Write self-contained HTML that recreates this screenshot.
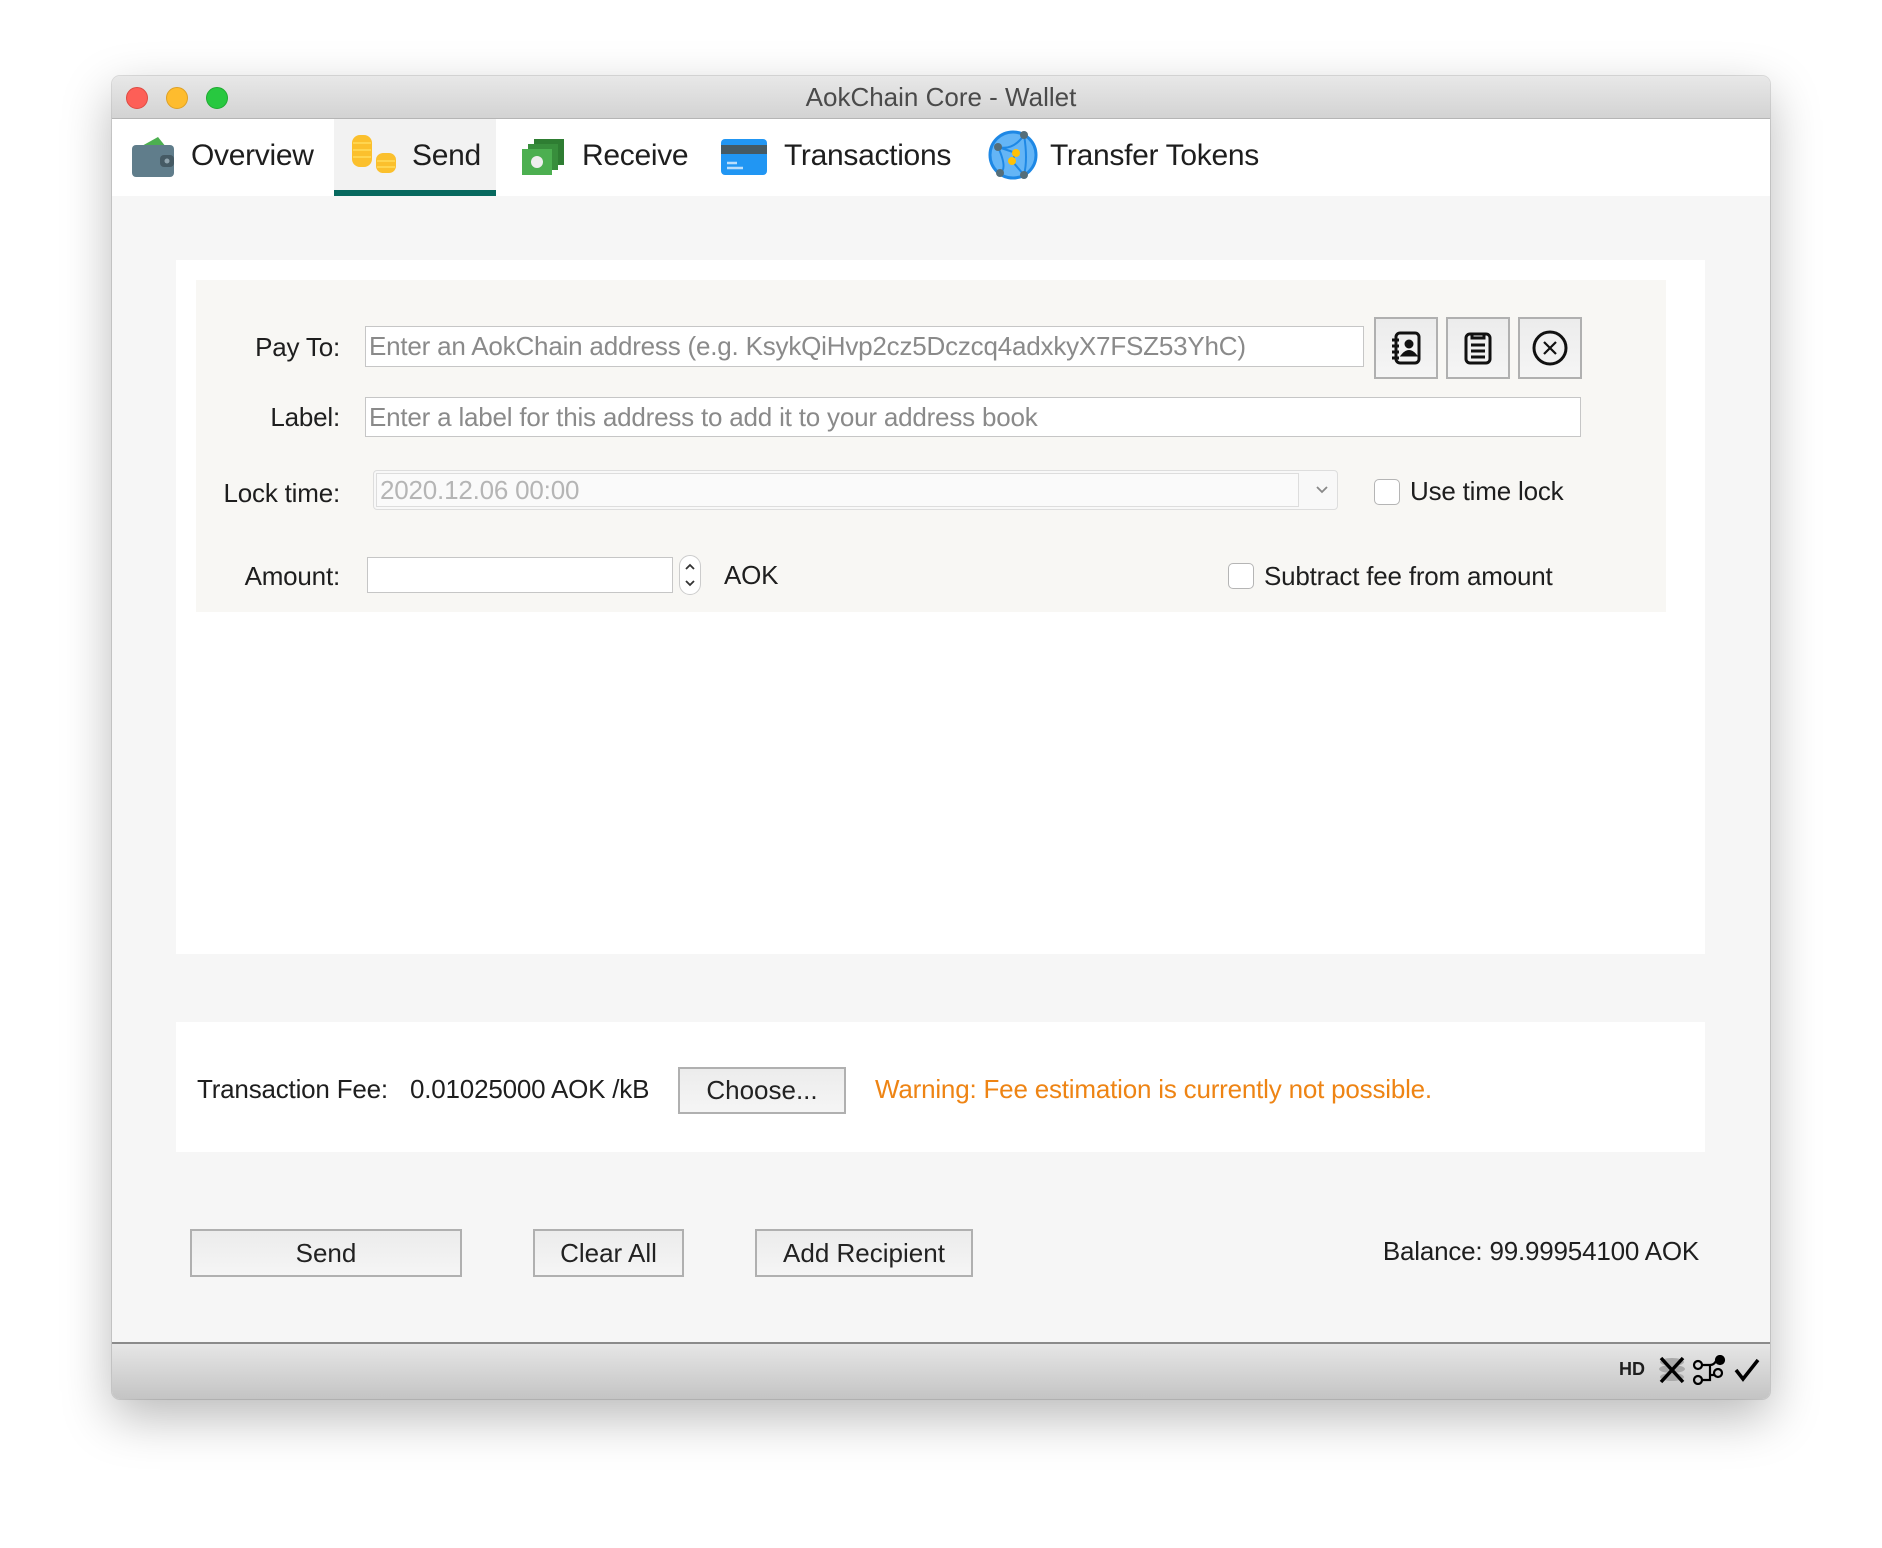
<!DOCTYPE html>
<html><head><meta charset="utf-8"><style>
*{box-sizing:border-box;margin:0;padding:0}
body{width:1882px;height:1548px;background:#fff;position:relative;font-family:"Liberation Sans",sans-serif;color:#1e1e1e;overflow:hidden}
.a{position:absolute}
.win{left:112px;top:76px;width:1658px;height:1323px;background:#f6f6f6;border-radius:8px;box-shadow:0 18px 50px rgba(0,0,0,.28),0 0 0 1px rgba(0,0,0,.12);overflow:hidden}
.title{left:0;top:0;width:1658px;height:43px;background:linear-gradient(#e8e8e8,#d3d3d3);border-bottom:1px solid #b5b5b5;text-align:center;font-size:26px;line-height:43px;color:#4a4a4a}
.dot{top:11px;width:22px;height:22px;border-radius:50%}
.tabs{left:0;top:43px;width:1658px;height:77px;background:#fff}
.tab{font-size:30px;top:0;line-height:73px;letter-spacing:-0.3px}
.txt{font-size:26px;white-space:nowrap;letter-spacing:-0.2px}
.inp{background:#fff;border:1px solid #c6c6c6;font-size:26px;color:#8a8a8a;padding-left:3px;white-space:nowrap;overflow:hidden;letter-spacing:-0.2px}
.btn{background:linear-gradient(#ececec,#f5f5f5);border:2px solid #b0b0b0;font-size:26px;text-align:center;color:#222}
.cb{width:26px;height:26px;border:1.5px solid #b5b5b5;border-radius:5px;background:#fff}
</style></head><body>
<div class="a win">
 <div class="a title">AokChain Core - Wallet</div>
 <div class="a dot" style="left:14px;background:#fd5f57;border:1px solid #de4a42"></div>
 <div class="a dot" style="left:54px;background:#febc2e;border:1px solid #dea024"></div>
 <div class="a dot" style="left:94px;background:#28c840;border:1px solid #1eaa30"></div>
 <div class="a tabs">
  <div class="a" style="left:222px;top:0;width:162px;height:77px;background:#f2f2f2"></div>
  <div class="a" style="left:222px;top:71px;width:162px;height:6px;background:#08695f"></div>
  <svg class="a" style="left:18px;top:14px" width="46" height="46" viewBox="0 0 46 46"><path d="M10 14 L28 4 L36 14Z" fill="#4caf50"/><rect x="2" y="12" width="42" height="32" rx="4" fill="#607d8b"/><rect x="30" y="22" width="14" height="12" rx="4" fill="#455a64"/><circle cx="37" cy="28" r="2.5" fill="#90a4ae"/></svg>
  <div class="a tab" style="left:79px">Overview</div>
  <svg class="a" style="left:238px;top:14px" width="46" height="44" viewBox="0 0 46 44"><g fill="#fbc02d"><rect x="2" y="2" width="20" height="32" rx="8"/><rect x="26" y="20" width="20" height="20" rx="7"/></g><g stroke="#ffd54f" stroke-width="2"><path d="M3 10h18M3 17h18M3 24h18M27 28h18M27 34h18"/></g></svg>
  <div class="a tab" style="left:300px">Send</div>
  <svg class="a" style="left:410px;top:18px" width="42" height="40" viewBox="0 0 42 40"><rect x="12" y="2" width="30" height="26" fill="#2e7d32"/><rect x="6" y="7" width="30" height="26" fill="#388e3c"/><rect x="0" y="12" width="30" height="26" fill="#4caf50"/><circle cx="15" cy="25" r="6" fill="#eee"/></svg>
  <div class="a tab" style="left:470px">Receive</div>
  <svg class="a" style="left:609px;top:20px" width="46" height="36" viewBox="0 0 46 36"><rect x="0" y="0" width="46" height="36" rx="4" fill="#2196f3"/><rect x="0" y="6" width="46" height="9" fill="#455a64"/><path d="M6 24h10M6 29h16" stroke="#bbdefb" stroke-width="2.5"/></svg>
  <div class="a tab" style="left:672px">Transactions</div>
  <svg class="a" style="left:876px;top:10px" width="50" height="52" viewBox="0 0 50 52"><circle cx="25" cy="26" r="23" fill="#64b5f6" stroke="#1e88e5" stroke-width="3"/><path d="M10 18 Q25 22 36 6 M10 18 Q20 40 12 44 M36 6 Q40 30 36 46 M10 18 L28 24 L24 32 L36 46" stroke="#1e88e5" stroke-width="2" fill="none"/><g fill="#546e7a"><circle cx="10" cy="18" r="4"/><circle cx="36" cy="6" r="4"/><circle cx="12" cy="44" r="4"/><circle cx="36" cy="46" r="4"/></g><g fill="#ffc107"><circle cx="28" cy="24" r="4"/><circle cx="24" cy="32" r="4"/></g></svg>
  <div class="a tab" style="left:938px">Transfer Tokens</div>
 </div>

 <div class="a" style="left:64px;top:184px;width:1529px;height:694px;background:#fff"></div>
 <div class="a" style="left:84px;top:204px;width:1470px;height:332px;background:#f8f7f4"></div>

 <div class="a txt" style="right:1430px;top:256px">Pay To:</div>
 <div class="a inp" style="left:253px;top:250px;width:999px;height:41px;line-height:39px">Enter an AokChain address (e.g. KsykQiHvp2cz5Dczcq4adxkyX7FSZ53YhC)</div>
 <div class="a btn" style="left:1262px;top:241px;width:64px;height:62px"></div>
 <div class="a btn" style="left:1334px;top:241px;width:64px;height:62px"></div>
 <div class="a btn" style="left:1406px;top:241px;width:64px;height:62px"></div>
 <svg class="a" style="left:1276px;top:254px" width="36" height="36" viewBox="0 0 36 36" fill="none" stroke="#111" stroke-width="3"><rect x="8" y="3" width="23" height="30" rx="4"/><path d="M4 10h7M4 16h7M4 22h7M4 28h7"/><circle cx="21" cy="14" r="3" fill="#111"/><path d="M15 25q6-7 12 0z" fill="#111"/></svg>
 <svg class="a" style="left:1348px;top:254px" width="36" height="36" viewBox="0 0 36 36" fill="none" stroke="#111" stroke-width="3"><rect x="6" y="4" width="24" height="29" rx="4"/><path d="M12 4v4h12V4M11 15h14M11 21h14M11 27h14"/></svg>
 <svg class="a" style="left:1419px;top:253px" width="38" height="38" viewBox="0 0 38 38" fill="none" stroke="#111" stroke-width="3"><circle cx="19" cy="19" r="16"/><path d="M13 13l12 12M25 13l-12 12" stroke-width="2.2"/></svg>

 <div class="a txt" style="right:1430px;top:326px">Label:</div>
 <div class="a inp" style="left:253px;top:321px;width:1216px;height:40px;line-height:38px">Enter a label for this address to add it to your address book</div>

 <div class="a txt" style="right:1430px;top:402px">Lock time:</div>
 <div class="a" style="left:261px;top:394px;width:965px;height:40px;border:1px solid #ddd;border-radius:4px;background:#f8f8f8"></div>
 <div class="a inp" style="left:264px;top:397px;width:923px;height:34px;line-height:32px;color:#b5b5b5;background:#fafafa;border-color:#ddd">2020.12.06 00:00</div>
 <svg class="a" style="left:1202px;top:408px" width="16" height="12" viewBox="0 0 16 12" fill="none" stroke="#888" stroke-width="1.8"><path d="M3 3l5 5 5-5"/></svg>
 <div class="a cb" style="left:1262px;top:403px"></div>
 <div class="a txt" style="left:1298px;top:400px">Use time lock</div>

 <div class="a txt" style="right:1430px;top:485px">Amount:</div>
 <div class="a inp" style="left:255px;top:481px;width:306px;height:36px"></div>
 <div class="a" style="left:567px;top:479px;width:22px;height:40px;border:1px solid #ccc;border-radius:11px;background:#fff"></div>
 <svg class="a" style="left:570px;top:483px" width="16" height="32" viewBox="0 0 16 32" fill="none" stroke="#333" stroke-width="1.8"><path d="M4 10l4-4 4 4M4 22l4 4 4-4"/></svg>
 <div class="a txt" style="left:612px;top:484px">AOK</div>
 <div class="a cb" style="left:1116px;top:487px"></div>
 <div class="a txt" style="left:1152px;top:485px">Subtract fee from amount</div>

 <div class="a" style="left:64px;top:946px;width:1529px;height:130px;background:#fff"></div>
 <div class="a txt" style="left:85px;top:998px">Transaction Fee:</div>
 <div class="a txt" style="left:298px;top:998px">0.01025000 AOK /kB</div>
 <div class="a btn" style="left:566px;top:991px;width:168px;height:47px;line-height:43px">Choose...</div>
 <div class="a txt" style="left:763px;top:998px;color:#ee8414">Warning: Fee estimation is currently not possible.</div>

 <div class="a btn" style="left:78px;top:1153px;width:272px;height:48px;line-height:44px">Send</div>
 <div class="a btn" style="left:421px;top:1153px;width:151px;height:48px;line-height:44px">Clear All</div>
 <div class="a btn" style="left:643px;top:1153px;width:218px;height:48px;line-height:44px">Add Recipient</div>
 <div class="a txt" style="right:71px;top:1160px">Balance: 99.99954100 AOK</div>

 <div class="a" style="left:0;top:1266px;width:1658px;height:57px;background:linear-gradient(#e6e6e6,#c4c4c4);border-top:2px solid #8a8a8a"></div>
 <div class="a" style="left:1507px;top:1283px;font-size:18px;font-weight:bold">HD</div>
 <svg class="a" style="left:1545px;top:1280px" width="30" height="28" viewBox="0 0 30 28"><g fill="#aaa"><ellipse cx="15" cy="6" rx="12" ry="4"/><ellipse cx="15" cy="13" rx="13" ry="4"/><ellipse cx="15" cy="21" rx="12" ry="4"/></g><path d="M4 2l22 24M26 2L4 26" stroke="#000" stroke-width="3.5"/></svg>
 <svg class="a" style="left:1580px;top:1279px" width="34" height="30" viewBox="0 0 34 30" fill="none" stroke="#000" stroke-width="2.2"><circle cx="6" cy="10" r="4"/><circle cx="26" cy="18" r="4"/><circle cx="6" cy="25" r="4"/><circle cx="28" cy="5" r="4" fill="#000"/><path d="M10 10h8q4 0 6-4M18 10v10h4M10 25h8v-8"/></svg>
 <svg class="a" style="left:1621px;top:1281px" width="28" height="26" viewBox="0 0 28 26" fill="none" stroke="#000" stroke-width="3.5"><path d="M3 13l7 9L25 3"/></svg>
</div>
</body></html>
